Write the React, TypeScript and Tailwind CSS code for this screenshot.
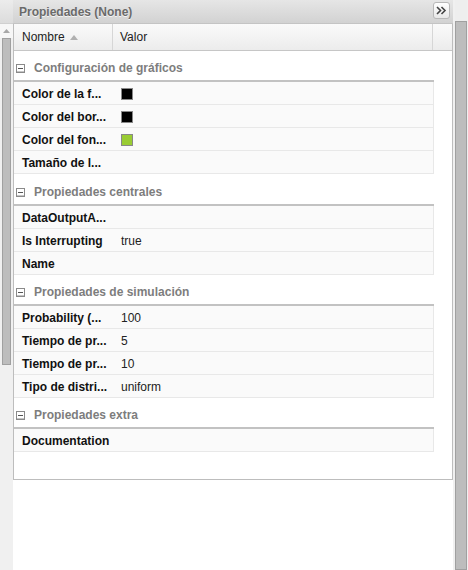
import React from "react";

type Row = { name: string; value?: string; swatch?: string };
type Group = { title: string; rows: Row[]; headCls: string };

const HEAD_A =
  "h-[31px] pt-[7px] pb-[2px] border-b-2 border-[#c2c2c2] flex items-center gap-[9px] pl-[2px]";
const HEAD_B =
  "h-[32px] pt-[8px] pb-[2px] border-b-2 border-[#c2c2c2] flex items-center gap-[9px] pl-[2px]";

const groups: Group[] = [
  {
    title: "Configuración de gráficos",
    headCls: HEAD_A,
    rows: [
      { name: "Color de la f...", swatch: "#000000" },
      { name: "Color del bor...", swatch: "#000000" },
      { name: "Color del fon...", swatch: "#99cc33" },
      { name: "Tamaño de l..." },
    ],
  },
  {
    title: "Propiedades centrales",
    headCls: HEAD_B,
    rows: [
      { name: "DataOutputA..." },
      { name: "Is Interrupting", value: "true" },
      { name: "Name" },
    ],
  },
  {
    title: "Propiedades de simulación",
    headCls: HEAD_A,
    rows: [
      { name: "Probability (...", value: "100" },
      { name: "Tiempo de pr...", value: "5" },
      { name: "Tiempo de pr...", value: "10" },
      { name: "Tipo de distri...", value: "uniform" },
    ],
  },
  {
    title: "Propiedades extra",
    headCls: HEAD_A,
    rows: [{ name: "Documentation" }],
  },
];

function MinusBox() {
  return (
    <svg width="9" height="9" viewBox="0 0 9 9" className="shrink-0">
      <rect x="0.5" y="0.5" width="8" height="8" fill="#fff" stroke="#8a8a8a" />
      <line x1="2" y1="4.5" x2="7" y2="4.5" stroke="#555" strokeWidth="1" />
      <line x1="0.5" y1="8" x2="8.5" y2="8" stroke="#8a8a8a" strokeWidth="1" />
    </svg>
  );
}

export default function App() {
  return (
    <div
      className="w-[468px] h-[570px] bg-[#f0f0f0] flex overflow-hidden"
      style={{ fontFamily: '"Liberation Sans", Arial, sans-serif' }}
    >
      {/* left scrollbar */}
      <div className="w-[13px] flex flex-col shrink-0">
        <div className="h-[24px] bg-gradient-to-b from-[#ececec] to-[#dcdcdc] border-b border-[#d0d0d0]" />
        <div className="h-[14px] bg-[#f7f7f7] flex items-center justify-center">
          <svg width="7" height="4" viewBox="0 0 7 4">
            <polygon points="3.5,0 7,4 0,4" fill="#a8a8a8" />
          </svg>
        </div>
        <div className="h-[327px] mx-[2px] bg-[#bdbdbd] border border-[#a0a0a0]" />
        <div className="flex-1 bg-[#f0f0f0]" />
      </div>

      {/* panel */}
      <div className="w-[440px] flex flex-col shrink-0 bg-white">
        <div className="h-[24px] bg-gradient-to-b from-[#e6e6e6] to-[#d2d2d2] border-b border-[#c4c4c4] flex items-center pl-[6px] pr-[3px] relative">
          <span className="text-[12px] font-bold text-[#6a6a6a] leading-[20px] [text-shadow:0_1px_0_#f4f4f4]">
            Propiedades (None)
          </span>
          <div className="ml-auto w-[17px] h-[17px] mb-[2px] rounded-[3px] border border-[#b8b8b8] bg-gradient-to-b from-[#ffffff] to-[#e8e8e8] flex items-center justify-center">
            <svg width="11" height="9" viewBox="0 0 11 9">
              <path d="M1 1 L4.5 4.5 L1 8" fill="none" stroke="#444" strokeWidth="1.6" />
              <path d="M5.5 1 L9 4.5 L5.5 8" fill="none" stroke="#444" strokeWidth="1.6" />
            </svg>
          </div>
        </div>

        <div className="h-[456px] bg-white border-l border-r border-b border-[#bdbdbd] flex flex-col">
          {/* table header */}
          <div className="h-[27px] shrink-0 flex bg-gradient-to-b from-[#fafafa] to-[#ececec] border-b border-[#c6c6c6] text-[12px] text-[#222]">
            <div className="w-[99px] border-r border-[#d6d6d6] flex items-center pl-[8px] gap-[5px]">
              <span>Nombre</span>
              <svg width="8" height="5" viewBox="0 0 8 5">
                <polygon points="4,0 8,5 0,5" fill="#b0b0b0" />
              </svg>
            </div>
            <div className="w-[320px] border-r border-[#d6d6d6] flex items-center pl-[7px]">
              Valor
            </div>
            <div className="flex-1" />
          </div>

          {groups.map((g, gi) => (
            <div key={gi} className="w-[420px] flex flex-col">
              <div className={g.headCls}>
                <MinusBox />
                <span className="text-[12px] font-bold text-[#7d7d7d] leading-[20px]">{g.title}</span>
              </div>
              {g.rows.map((r, ri) => (
                <div
                  key={ri}
                  className="h-[23px] pt-[2px] flex bg-[#fafafa] border-b border-r border-[#e8e8e8] text-[12px]"
                >
                  <div className="w-[99px] pl-[8px] flex items-center font-bold text-[#111] whitespace-nowrap overflow-hidden">
                    {r.name}
                  </div>
                  <div className="flex-1 pl-[8px] flex items-center text-[#222]">
                    {r.swatch ? (
                      <span
                        className="w-[12px] h-[12px] border border-[#888]"
                        style={{ backgroundColor: r.swatch }}
                      />
                    ) : (
                      r.value
                    )}
                  </div>
                </div>
              ))}
            </div>
          ))}
        </div>
        <div className="flex-1 bg-white" />
      </div>

      {/* right scrollbar */}
      <div className="flex-1 flex flex-col pl-[2px] pr-[1px]">
        <div className="h-[21px] bg-[#eeeeee]" />
        <div className="flex-1 bg-[#bdbdbd] border border-[#a0a0a0]" />
      </div>
    </div>
  );
}
